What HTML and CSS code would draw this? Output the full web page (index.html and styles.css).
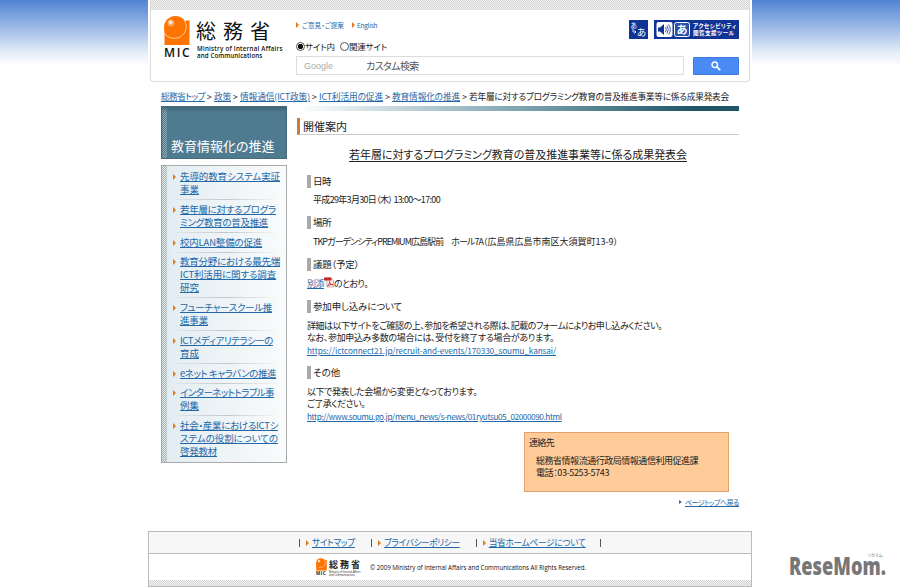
FILE: index.html
```html
<!DOCTYPE html>
<html lang="ja">
<head>
<meta charset="utf-8">
<title>総務省｜教育情報化の推進｜開催案内</title>
<link rel="stylesheet" href="styles.css">
</head>
<body>
<div class="page">
  <header class="header">
    <div class="dots"></div>
    <div class="header-main">
      <div class="logo">
        <div class="logo-mark">
          <svg viewBox="0 0 26 30" width="26" height="30"><path d="M.5 14H5L22 4.500H25.500V29H.5Z" fill="#ff7300"/><circle cx="11.500" cy="11.500" r="11.500" fill="#ff7300"/><path d="M20 4Q24 9 21 16Q16 24 7 22Q3 21 1 18" fill="none" stroke="#ffd0a0" stroke-width="1"/><circle cx="7" cy="7" r="3.500" fill="#ffa45a"/><circle cx="6.500" cy="6.500" r="2" fill="#ffe9d6"/></svg>
          <b>MIC</b>
        </div>
        <div class="logo-text">
          <div class="logo-name">総務省</div>
          <div class="logo-en"><span class="en-1">Ministry of Internal Affairs</span><br><span class="en-2">and Communications</span></div>
        </div>
      </div>
      <div class="tools">
        <div class="tools-top">
          <div class="mini-links"><i class="tri"></i><a><span class="p19">ご意見・ご提案</span></a><i class="tri second"></i><a><span class="m30">English</span></a></div>
          <div class="badges">
            <svg class="badge" viewBox="0 0 19 19" width="19" height="19"><rect width="19" height="19" fill="#0f3496"/><g fill="#fff"><text x="1.500" y="7.500" font-size="6.500">あ</text><text x="8" y="16" font-size="9.500">あ</text></g><path d="M4 9V12H7M5.500 10.500L7 12L5.500 13.500" fill="none" stroke="#fff" stroke-width=".8"/></svg>
            <svg class="badge" viewBox="0 0 85 19" width="85" height="19"><rect width="85" height="19" fill="#0f3496"/><rect x="2.500" y="2" width="16" height="15" rx="2" fill="#fff"/><path d="M4 7.500H6L10 4V15L6 11.500H4Z" fill="#0f3496"/><path d="M11.500 7Q13 9.500 11.500 12M13 5.500Q15.500 9.500 13 13.500M14.700 4.500Q18 9.500 14.700 14.500" fill="none" stroke="#0f3496" stroke-width=".8"/><rect x="20.500" y="2.500" width="15" height="14" rx="2" fill="#2a50a8" stroke="#fff"/><g fill="#fff" font-weight="bold"><text x="22.500" y="13.800" font-size="11">あ</text><text x="39" y="8.200" font-size="5.600" textLength="43">アクセシビリティ</text><text x="39" y="15.200" font-size="5.600" textLength="41">閲覧支援ツール</text></g></svg>
          </div>
        </div>
        <div class="radios"><i class="radio on"></i><span class="m15">サイト内</span><i class="radio two"></i><span class="m20">関連サイト</span></div>
        <div class="search">
          <div class="field"><span class="google">Google</span><span class="custom">カスタム検索</span></div>
          <div class="button"><svg viewBox="0 0 12 12" width="10" height="10"><circle cx="4.500" cy="4.500" r="3.300" fill="none" stroke="#fff" stroke-width="1.800"/><path d="M7 7L11 11" stroke="#fff" stroke-width="2.200"/></svg></div>
        </div>
      </div>
    </div>
  </header>

  <nav class="crumbs"><a><span class="m60">総務省トップ</span></a><i>&gt;</i><a><span class="m19">政策</span></a><i>&gt;</i><a><span class="m10">情報通信(ICT政策)</span></a><i>&gt;</i><a><span class="m10">ICT利活用の促進</span></a><i>&gt;</i><a><span class="m15">教育情報化の推進</span></a><i>&gt;</i><span class="m26">若年層に対するプログラミング教育の普及推進事業等に係る成果発表会</span></nav>

  <div class="columns">
    <aside class="side">
      <div class="side-title">教育情報化の推進</div>
      <ul class="side-list">
        <li><a><span class="m10">先導的教育システム実証</span><br>事業</a></li>
        <li><a><span class="m28">若年層に対するプログラ</span><br><span class="m30">ミング教育の普及推進</span></a></li>
        <li><a><span class="m20">校内LAN整備の促進</span></a></li>
        <li><a><span class="m23">教育分野における最先端</span><br><span class="m13">ICT利活用に関する調査</span><br>研究</a></li>
        <li><a><span class="m31">フューチャースクール推</span><br><span class="m17">進事業</span></a></li>
        <li><a><span class="m45">ICTメディアリテラシーの</span><br>育成</a></li>
        <li><a><span class="m47">eネット キャラバンの推進</span></a></li>
        <li><a><span class="m55">インターネットトラブル事</span><br>例集</a></li>
        <li><a><span class="m30">社会・産業におけるICTシ</span><br><span class="m05">ステムの役割についての</span><br><span class="m25">啓発教材</span></a></li>
      </ul>
    </aside>
    <main class="main">
      <div class="bar"></div>
      <h1>開催案内</h1>
      <p class="title"><u><span class="m05">若年層に対するプログラミング教育の普及推進事業等に係る成果発表会</span></u></p>
      <h2><span class="m51">日時</span></h2>
      <p class="in"><span class="m68">平成29年3月30日（木） 13:00～17:00</span></p>
      <h2><span class="m51">場所</span></h2>
      <p class="in venue"><span class="m95">TKPガーデンシティPREMIUM広島駅前　ホール7A</span><span>（広島県広島市南区大須賀町13-9）</span></p>
      <h2><span class="m25">議題（予定）</span></h2>
      <p class="attach"><a><span class="m51">別添</span></a><svg viewBox="0 0 10 11" width="10" height="11"><path d="M2.500 1H7L9.500 3.500V10H3Z" fill="#f6ebe8" stroke="#b09a98" stroke-width=".7"/><path d="M0 .5H7.500V3.500H0Z" fill="#c0282a"/><path d="M3.500 9C5.500 7 6 5.500 5.500 4.500C5.500 6 7 7.500 9 7.800C7 7 4.500 8 3.500 9" fill="none" stroke="#c8201c" stroke-width=".8"/></svg><span class="m61">のとおり。</span></p>
      <h2><span class="m18">参加申し込みについて</span></h2>
      <div class="text"><p><span class="m50">詳細は以下サイトをご確認の上、参加を希望される際は、記載のフォームによりお申し込みください。</span></p>
      <p><span class="m33">なお、参加申込み多数の場合には、受付を終了する場合があります。</span></p>
      <p class="url"><a><span class="m10">https://ictconnect21.jp/recruit-and-events/170330_soumu_kansai/</span></a></p></div>
      <h2>その他</h2>
      <div class="text"><p><span class="m47">以下で発表した会場から変更となっております。</span></p>
      <p><span class="m53">ご了承ください。</span></p>
      <p class="url"><a><span class="m41">http://www.soumu.go.jp/menu_news/s-news/01ryutsu05_02000090.html</span></a></p></div>
      <div class="contact"><p><span class="m67">連絡先</span></p><div><p><span class="m47">総務省情報流通行政局情報通信利用促進課</span></p><p><span class="m38">電話：03-5253-5743</span></p></div></div>
      <div class="pagetop"><i class="tri dark"></i><a><span class="m49">ページトップへ戻る</span></a></div>
    </main>
  </div>

  <footer class="footer">
    <div class="foot-links"><b></b><i class="tri"></i><a><span class="m37">サイトマップ</span></a><b class="gap"></b><i class="tri"></i><a><span class="m41">プライバシーポリシー</span></a><b class="gap"></b><i class="tri"></i><a><span class="m30">当省ホームページについて</span></a><b class="gap last"></b></div>
    <div class="foot-copy">
      <div class="mini-logo"><div class="mini-mark"><svg viewBox="0 0 26 30" width="11" height="13"><path d="M.5 14H5L22 4.500H25.500V29H.5Z" fill="#ff7300"/><circle cx="11.500" cy="11.500" r="11.500" fill="#ff7300"/><path d="M20 4Q24 9 21 16Q16 24 7 22" fill="none" stroke="#ffd0a0" stroke-width="1.500"/><circle cx="7" cy="7" r="3" fill="#ffe0c0"/></svg><b>MIC</b></div>
      <div><div class="mini-name">総務省</div><div class="mini-en">Ministry of Internal Affairs<br>and Communications</div></div></div>
      <span class="copy">© 2009 Ministry of Internal Affairs and Communications All Rights Reserved.</span>
    </div>
    <div class="dots"></div>
  </footer>
</div>
<div class="watermark"><small>リセマム</small><svg viewBox="0 0 104 26" width="104" height="26"><text x="1" y="20.500" textLength="97" lengthAdjust="spacingAndGlyphs">ReseMom.</text></svg></div>
</body>
</html>
```
FILE: styles.css
```css
* { box-sizing: border-box; margin: 0; padding: 0; }
body {
  height: 588px; overflow: hidden; position: relative;
  font: 9.5px/12px "Noto Sans CJK JP", sans-serif;
  font-feature-settings: "palt"; color: #222;
  background: linear-gradient(#5183d2 0, #7da3de 16px, #b5cbed 36px, #e3ecf8 52px, #fff 66px) no-repeat, #fff;
}
i, b { font-style: normal; }
a { color: #2268a8; text-decoration: underline; text-underline-offset: 1px; text-decoration-thickness: 1px; }
span { white-space: nowrap; }

/* Letter tracking, in hundredths of a pixel (p: looser, m: tighter) */
.p19 { letter-spacing: .19px; }
.m05 { letter-spacing: -.05px; }
.m10 { letter-spacing: -.1px; }
.m13 { letter-spacing: -.13px; }
.m15 { letter-spacing: -.15px; }
.m17 { letter-spacing: -.17px; }
.m18 { letter-spacing: -.18px; }
.m19 { letter-spacing: -.19px; }
.m20 { letter-spacing: -.2px; }
.m23 { letter-spacing: -.23px; }
.m25 { letter-spacing: -.25px; }
.m26 { letter-spacing: -.26px; }
.m28 { letter-spacing: -.28px; }
.m30 { letter-spacing: -.3px; }
.m31 { letter-spacing: -.31px; }
.m33 { letter-spacing: -.33px; }
.m37 { letter-spacing: -.37px; }
.m38 { letter-spacing: -.38px; }
.m41 { letter-spacing: -.41px; }
.m45 { letter-spacing: -.45px; }
.m47 { letter-spacing: -.47px; }
.m49 { letter-spacing: -.49px; }
.m50 { letter-spacing: -.5px; }
.m51 { letter-spacing: -.51px; }
.m53 { letter-spacing: -.53px; }
.m55 { letter-spacing: -.55px; }
.m60 { letter-spacing: -.6px; }
.m61 { letter-spacing: -.61px; }
.m67 { letter-spacing: -.67px; }
.m68 { letter-spacing: -.68px; }
.m95 { letter-spacing: -.95px; }

.page { width: 604px; height: 588px; margin-left: 148px; background: #fff; }
.dots { background: repeating-conic-gradient(#d2d2d2 0 25%, #f4f4f4 0 50%) 0 0 / 2px 2px; }
.header { height: 82px; margin: 0 2px; border: 1px solid #ddd; border-top: 0; border-radius: 0 0 4px 4px; box-shadow: 0 0 1px #ddd; }
.header .dots { height: 10px; }
.header-main { display: flex; height: 71px; }
.logo { display: flex; padding: 6px 0 0 13px; width: 145px; }
.logo-mark { width: 33px; }
.logo-mark svg { display: block; }
.logo-mark b { display: block; font: 600 12px/13px "Open Sans", sans-serif; letter-spacing: 1.6px; color: #111; }
.logo-name { font-size: 20px; line-height: 26px; letter-spacing: 7px; color: #111; white-space: nowrap; padding-top: 2px; margin: 0 0 1px -1px; }
.logo-en { font: 600 6.2px/7px "Open Sans", sans-serif; color: #111; }
.en-1 { letter-spacing: .25px; }
.en-2 { letter-spacing: .1px; }
.tools { flex: 1; padding-top: 10px; }
.tools-top { display: flex; height: 19px; }
.mini-links { display: flex; align-items: center; height: 10px; font-size: 6.5px; flex: 1; color: #2268a8; }
.mini-links a { text-decoration: none; }
.tri { border-left: 3px solid #e07a1c; border-top: 3px solid transparent; border-bottom: 3px solid transparent; margin-right: 3px; }
.tri.second { margin-left: 8px; margin-right: 2px; }
.badges { display: flex; gap: 6px; margin-right: 10px; }
.badges text { font-family: "Noto Sans CJK JP", sans-serif; }
.radios { display: flex; align-items: center; height: 14px; font-size: 8.5px; }
.radio { width: 9px; height: 9px; border: 1px solid #555; border-radius: 50%; background: #fff; }
.radio.on { background: radial-gradient(#111 2.3px, #fff 3px); }
.radio.two { margin-left: 5px; }
.search { display: flex; justify-content: space-between; margin: 3px 10px 0 0; }
.field { width: 388px; height: 19px; border: 1px solid #ddd; display: flex; align-items: center; padding-left: 7px; }
.google { font: 9px "Liberation Sans", sans-serif; color: #aaa; width: 62px; }
.custom { color: #555; font-size: 10px; letter-spacing: -.6px; }
.button { width: 46px; height: 18px; margin-top: 1px; background: #4a8af4; border: 1px solid #3c7be0; border-radius: 1px; display: flex; align-items: center; justify-content: center; }

.crumbs { height: 24px; padding: 8px 0 0 13px; display: flex; line-height: 14px; font-size: 8.7px; }
.crumbs i { width: 9px; text-align: center; }
.columns { display: flex; padding-left: 13px; height: 425px; }

.side { width: 126px; }
.side-title {
  height: 53px; border: 1px solid #476b7c; color: #fff; font-size: 13px; line-height: 18px; padding: 30px 0 0 9px; white-space: nowrap;
  background: linear-gradient(90deg, transparent 5px, #4f7b90 5px), repeating-conic-gradient(#8fadb9 0 25%, #4f7b8f 0 50%) 0 0 / 2px 2px;
  box-shadow: inset 0 4px 4px -2px #39616f;
}
.side-list {
  list-style: none; height: 298px; margin-top: 6px; border: 1px solid #aaa; padding: 4px 0 0 11px; line-height: 13px; font-size: 9.5px;
  background: linear-gradient(90deg, transparent 5px, #e3edf1 5px, #f9fbfc 100%), repeating-conic-gradient(#aab5b8 0 25%, #dfe6e8 0 50%) 0 0 / 2px 2px;
}
.side-list li { position: relative; padding-left: 7px; margin-bottom: 6.75px; }
.side-list li::before { content: ""; position: absolute; left: 0; top: 4px; border-left: 3px solid #e07a1c; border-top: 3px solid transparent; border-bottom: 3px solid transparent; }
.side-list li:not(:last-child)::after { content: ""; position: absolute; left: 3px; right: 10px; bottom: -4px; height: 1px; background: linear-gradient(90deg, #e0e7ea, #c2c9cc, #f4f4f4); }

.main { width: 452px; padding-left: 10px; }
.bar { height: 5px; background: linear-gradient(90deg, #fff, #7fa5b1 50%, #1f5566 90%); }
h1 { height: 17px; margin-top: 7px; border-left: 3px solid #cd7a38; padding-left: 3px; font-size: 11px; line-height: 16px; font-weight: 400; border-bottom: 1px solid #ccc; }
.main p { height: 12px; }
.main .title { text-align: center; font-size: 11px; line-height: 16px; height: 16px; margin: 11px 0 13px; }
.title u { text-underline-offset: 2px; text-decoration-thickness: 1px; }
h2 { margin-left: 10px; border-left: 4px solid #aaa; padding-left: 2px; height: 13px; line-height: 13px; font-size: 9.5px; font-weight: 400; }
.in { margin: 6px 0 10px 16px; font-size: 9px; }
.venue { margin-top: 7px; display: flex; }
.attach { display: flex; margin: 7px 0 10px 10px; font-size: 9px; }
.attach svg { margin-top: -1px; }
.text { margin: 7px 0 9px 10px; font-size: 9px; }
.text .url { font-size: 8.2px; height: 13px; }
.contact { margin: 9px 0 0 227px; width: 205px; height: 60px; background: #fc9; border: 1px solid #e2a26a; padding: 4px; font-size: 9px; }
.contact div { padding: 6px 0 0 7px; }
.pagetop { display: flex; justify-content: flex-end; align-items: center; height: 12px; margin-top: 4px; font-size: 7px; }
.tri.dark { border-left-color: #567; border-width: 2px; border-left-width: 3px; }

.footer { border: 1px solid #bbb; height: 56px; }
.foot-links { height: 22px; background: #f7f7f7; border-bottom: 1px solid #bbb; display: flex; align-items: center; padding-left: 150px; font-size: 8.7px; }
.foot-links b { width: 1px; height: 8px; background: #555; margin-right: 6px; }
.foot-links .gap { margin-left: 16px; }
.foot-links .last { margin-left: 14px; }
.foot-copy { height: 26px; display: flex; align-items: center; padding-left: 167px; }
.mini-logo { display: flex; width: 54px; height: 18px; }
.mini-mark { width: 13px; }
.mini-mark svg { display: block; }
.mini-mark b { display: block; font: bold 4.5px/4px "Open Sans", sans-serif; letter-spacing: .5px; }
.mini-name { font-size: 9px; line-height: 13px; font-weight: 700; letter-spacing: 2px; white-space: nowrap; }
.mini-en { font: 2.6px/3px "Open Sans", sans-serif; white-space: nowrap; }
.copy { font: 500 6.2px "Open Sans", sans-serif; letter-spacing: -.03px; color: #111; }
.footer .dots { height: 6px; }

.watermark { position: absolute; left: 788px; top: 554px; }
.watermark svg { display: block; }
.watermark text { font: 800 24px "Open Sans", sans-serif; fill: #777; }
.watermark small { position: absolute; left: 80px; top: -1px; font-size: 4px; line-height: 5px; white-space: nowrap; color: #777; }
```
